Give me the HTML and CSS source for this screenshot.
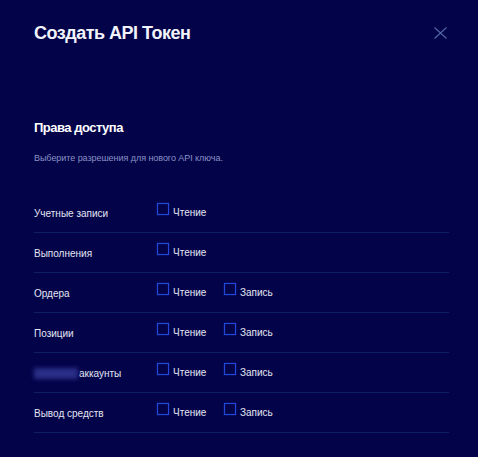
FILE: index.html
```html
<!DOCTYPE html>
<html lang="ru">
<head>
<meta charset="utf-8">
<title>Создать API Токен</title>
<link rel="stylesheet" href="styles.css">
</head>
<body>
<div class="modal">
  <header class="modal-head">
    <h1 class="title">Создать API Токен</h1>
    <button class="close" aria-label="Закрыть">
      <svg width="13" height="12" viewBox="0 0 13 12"><path d="M0.5 0.5 L12.5 11.5 M12.5 0.5 L0.5 11.5" stroke="#5566a8" stroke-width="1.1" fill="none"/></svg>
    </button>
  </header>
  <section class="perms">
    <h2 class="section-title">Права доступа</h2>
    <p class="hint">Выберите разрешения для нового API ключа.</p>
    <div class="rows">
      <div class="row">
        <span class="label">Учетные записи</span>
        <div class="opts">
          <label class="opt"><span class="box"></span>Чтение</label>
        </div>
      </div>
      <div class="row">
        <span class="label">Выполнения</span>
        <div class="opts">
          <label class="opt"><span class="box"></span>Чтение</label>
        </div>
      </div>
      <div class="row">
        <span class="label">Ордера</span>
        <div class="opts">
          <label class="opt"><span class="box"></span>Чтение</label>
          <label class="opt"><span class="box"></span>Запись</label>
        </div>
      </div>
      <div class="row">
        <span class="label">Позиции</span>
        <div class="opts">
          <label class="opt"><span class="box"></span>Чтение</label>
          <label class="opt"><span class="box"></span>Запись</label>
        </div>
      </div>
      <div class="row">
        <span class="label"><span class="blur"></span>аккаунты</span>
        <div class="opts">
          <label class="opt"><span class="box"></span>Чтение</label>
          <label class="opt"><span class="box"></span>Запись</label>
        </div>
      </div>
      <div class="row">
        <span class="label">Вывод средств</span>
        <div class="opts">
          <label class="opt"><span class="box"></span>Чтение</label>
          <label class="opt"><span class="box"></span>Запись</label>
        </div>
      </div>
    </div>
  </section>
</div>
</body>
</html>
```
FILE: styles.css
```css
html, body {
  margin: 0;
  padding: 0;
  background: #03034a;
}
body {
  font-family: "Liberation Sans", Arial, sans-serif;
  color: #e8eaf6;
  width: 478px;
  height: 457px;
  overflow: hidden;
}
.modal {
  padding: 0 29px 0 34px;
}
.modal-head {
  display: flex;
  justify-content: space-between;
  align-items: flex-start;
  padding-top: 22px;
}
.title {
  margin: 0;
  font-size: 18px;
  line-height: 22px;
  font-weight: bold;
  color: #f2f3fa;
  letter-spacing: -0.5px;
}
.close {
  background: none;
  border: 0;
  padding: 0;
  margin: 5px 2px 0 0;
  display: block;
  line-height: 0;
}
.perms {
  padding-top: 76px;
}
.section-title {
  margin: 0;
  font-size: 13px;
  line-height: 16px;
  font-weight: bold;
  color: #ffffff;
  letter-spacing: -0.5px;
}
.hint {
  margin: 16px 0 0;
  font-size: 9px;
  line-height: 12px;
  color: #8a92c4;
  letter-spacing: -0.05px;
}
.rows {
  margin-top: 29px;
}
.row {
  display: flex;
  align-items: center;
  height: 39px;
  border-bottom: 1px solid #0f1f66;
}
.label {
  width: 123px;
  flex: none;
  font-size: 10px;
  color: #e4e6f2;
  display: flex;
  align-items: center;
  padding-top: 1px;
}
.blur {
  display: inline-block;
  width: 44px;
  height: 11px;
  margin-right: 1px;
  background: #2a2e86;
  filter: blur(2px);
}
.opts {
  display: flex;
  gap: 0;
}
.opt {
  display: flex;
  align-items: center;
  width: 67px;
  font-size: 10px;
  color: #e4e6f2;
}
.box {
  width: 10px;
  height: 10px;
  border: 1px solid #2148d6;
  box-shadow: 0 0 1px #1a3cc0, inset 0 0 1px #1a3cc0;
  box-sizing: content-box;
  margin: 0 4px 8px 0;
  flex: none;
}
```
